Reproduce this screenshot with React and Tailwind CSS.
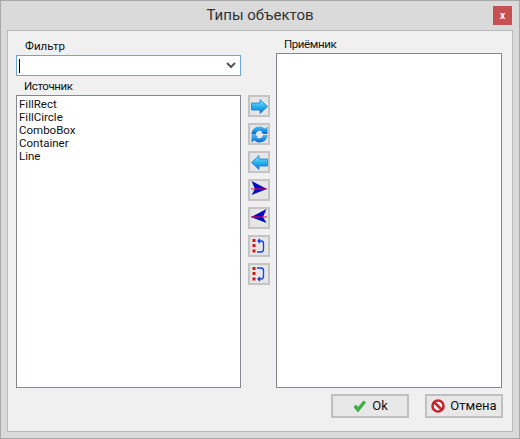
import React from 'react';

const font = { fontFamily: 'Roboto, "Open Sans", sans-serif' };

const ArrowBlue = ({ flip }) => (
  <svg width="17" height="15" viewBox="0 0 17 15" style={flip ? { transform: 'scaleX(-1)' } : undefined}>
    <defs>
      <linearGradient id="ab" x1="0" y1="0" x2="0" y2="1">
        <stop offset="0" stopColor="#8be6fc" />
        <stop offset="0.5" stopColor="#29b4ee" />
        <stop offset="1" stopColor="#0b6fd0" />
      </linearGradient>
    </defs>
    <path d="M0.5 4H9V0.5L16.5 7.5L9 14.5V11H0.5Z" fill="url(#ab)" stroke="#1a78d6" strokeWidth="0.8" />
  </svg>
);

const Refresh = () => (
  <svg width="17" height="17" viewBox="0 0 16 16">
    <defs>
      <linearGradient id="rf" x1="0" y1="0" x2="0" y2="1">
        <stop offset="0" stopColor="#45bdf2" />
        <stop offset="1" stopColor="#0b64cc" />
      </linearGradient>
    </defs>
    <path d="M0.5 8C0.5 3.5 3.5 0.5 8 0.5C10.5 0.5 12 1.5 13 2.5L15.5 0.5V7.5H9L10.5 5.5C10 5 9 4.5 8 4.5C6 4.5 5 6 4.5 8Z" fill="url(#rf)" />
    <path d="M15.5 8.5C15.5 12.5 12.5 15.5 8 15.5C5.5 15.5 4 14.5 3 13.5L0.5 15.5V8.5H7L5.5 10.5C6 11 7 11.5 8 11.5C10 11.5 11 10 11.5 8.5Z" fill="url(#rf)" />
    <path d="M5 7H11M5 9H11" stroke="#d8f2fd" strokeWidth="0.9" />
  </svg>
);

const Dart = ({ flip }) => (
  <svg width="16" height="16" viewBox="0 0 16 16" className="-mt-[2px]" style={flip ? { transform: 'scaleX(-1)' } : undefined}>
    <path d="M0.5 0L16 8L0.5 14L4 8Z" fill="#0707c8" />
    <path d="M0 8H16" stroke="#e8112d" strokeWidth="1" />
  </svg>
);

const Loop = ({ down }) => (
  <svg width="16" height="18" viewBox="0 0 16 18">
    <rect x="1.5" y="2" width="3" height="3" fill="#d8141c" />
    <rect x="1.5" y="7" width="3" height="3" fill="#d8141c" />
    <rect x="1.5" y="12.5" width="3" height="3" fill="#d8141c" />
    {down ? (
      <path d="M6 3H10C11.5 3 12.5 4 12.5 5.5V11C12.5 13 11.5 14 10 14H7M9 12L7 14L9 16" fill="none" stroke="#1040e8" strokeWidth="1.3" />
    ) : (
      <path d="M7 4H10C11.5 4 12.5 5 12.5 6.5V12C12.5 14 11.5 15 10 15H6M9 2L7 4L9 6" fill="none" stroke="#1040e8" strokeWidth="1.3" />
    )}
  </svg>
);

const ToolButton = ({ children }) => (
  <button className="w-[22px] h-[22px] flex items-center justify-center border-2 border-[#c4c4c4] bg-[#e6e6e6]">
    {children}
  </button>
);

const items = ['FillRect', 'FillCircle', 'ComboBox', 'Container', 'Line'];

export default function App() {
  return (
    <div style={font} className="w-[520px] h-[439px] flex flex-col border border-[#a8a8a8] bg-[#dadada] overflow-hidden">
      <div className="h-[29px] shrink-0 flex items-center justify-center relative">
        <span className="text-[15px] text-[#333]">Типы объектов</span>
        <button className="absolute right-[7px] top-[5px] w-[19px] h-[19px] bg-[#c75050] flex items-center justify-center text-white text-[10px] font-bold leading-none">
          x
        </button>
      </div>

      <div className="flex-1 mx-[6px] mb-[6px] border border-[#b8b8b8] bg-[#f0f0f0] flex flex-col pl-[8px] pr-[8px]">
        <div className="flex flex-1">
          <div className="w-[225px] flex flex-col">
            <div className="h-[24px] pl-[9px] pt-[7px] text-[11.5px] leading-[16px] text-[#111]">Фильтр</div>
            <div className="h-[21px] border border-[#6ea5d8] bg-white flex items-center justify-between pl-[2px] pr-[4px]">
              <span className="w-px h-[14px] bg-black" />
              <svg width="10" height="7" viewBox="0 0 10 7">
                <path d="M1 1L5 5L9 1" fill="none" stroke="#555" strokeWidth="2" />
              </svg>
            </div>
            <div className="h-[19px] pl-[8px] pt-[2px] text-[11.5px] tracking-[-0.4px] leading-[16px] text-[#111]">Источник</div>
            <div className="flex-1 border border-[#828790] bg-white pl-[2px] pt-[2px] text-[11.5px] leading-[13px] text-[#111]">
              {items.map((item) => (
                <div key={item}>{item}</div>
              ))}
            </div>
          </div>

          <div className="w-[35px] flex flex-col items-start gap-[6px] pt-[64px] pl-[7px]">
            <ToolButton><ArrowBlue /></ToolButton>
            <ToolButton><Refresh /></ToolButton>
            <ToolButton><ArrowBlue flip /></ToolButton>
            <ToolButton><Dart /></ToolButton>
            <ToolButton><Dart flip /></ToolButton>
            <ToolButton><Loop /></ToolButton>
            <ToolButton><Loop down /></ToolButton>
          </div>

          <div className="w-[226px] flex flex-col">
            <div className="h-[22px] pl-[8px] pt-[5px] text-[11.5px] tracking-[-0.4px] leading-[16px] text-[#111]">Приёмник</div>
            <div className="flex-1 border border-[#828790] bg-white" />
          </div>
        </div>

        <div className="h-[43px] shrink-0 flex justify-end items-start pt-[6px] gap-[16px] pr-px">
          <button className="w-[78px] h-[24px] border-2 border-[#c0c0c0] bg-[#e8e8e8] flex items-center justify-center gap-[5px] text-[13px] text-[#111]">
            <svg width="15" height="13" viewBox="0 0 14 13">
              <path d="M1 7L3.5 4.5L5.5 7L11 0.5L13.5 2.5L5.5 12.5Z" fill="#3cb043" />
            </svg>
            Ok
          </button>
          <button className="w-[78px] h-[24px] border-2 border-[#c0c0c0] bg-[#e8e8e8] flex items-center justify-center gap-[5px] text-[13px] text-[#111]">
            <svg width="14" height="14" viewBox="0 0 14 14">
              <circle cx="7" cy="7" r="5.5" fill="#fff" stroke="#c0272d" strokeWidth="2.6" />
              <path d="M3 3L11 11" stroke="#c0272d" strokeWidth="2.6" />
            </svg>
            Отмена
          </button>
        </div>
      </div>
    </div>
  );
}
